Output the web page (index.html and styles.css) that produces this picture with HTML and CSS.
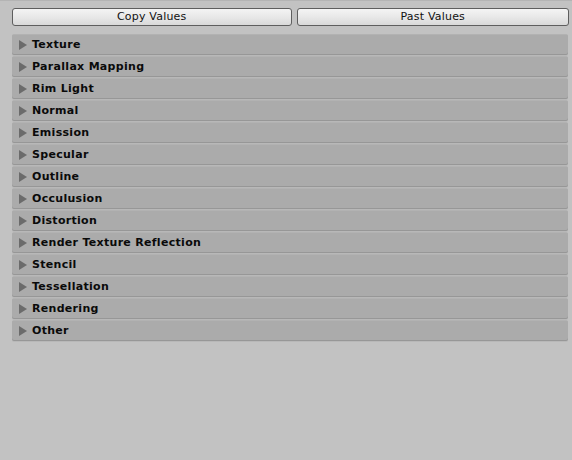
FILE: index.html
```html
<!DOCTYPE html>
<html>
<head>
<meta charset="utf-8">
<link rel="stylesheet" href="styles.css">
</head>
<body>
<div class="topline"></div>
<div class="panel">
  <div class="buttons">
    <button class="btn btn-left">Copy Values</button>
    <button class="btn btn-right">Past Values</button>
  </div>
  <div class="list">
    <div class="row"><span class="tri"></span>Texture</div>
    <div class="row"><span class="tri"></span>Parallax Mapping</div>
    <div class="row"><span class="tri"></span>Rim Light</div>
    <div class="row"><span class="tri"></span>Normal</div>
    <div class="row"><span class="tri"></span>Emission</div>
    <div class="row"><span class="tri"></span>Specular</div>
    <div class="row"><span class="tri"></span>Outline</div>
    <div class="row"><span class="tri"></span>Occulusion</div>
    <div class="row"><span class="tri"></span>Distortion</div>
    <div class="row"><span class="tri"></span>Render Texture Reflection</div>
    <div class="row"><span class="tri"></span>Stencil</div>
    <div class="row"><span class="tri"></span>Tessellation</div>
    <div class="row"><span class="tri"></span>Rendering</div>
    <div class="row"><span class="tri"></span>Other</div>
  </div>
</div>
</body>
</html>
```
FILE: styles.css
```css
html, body {
  margin: 0;
  padding: 0;
  background: #c2c2c2;
  width: 572px;
  height: 460px;
  overflow: hidden;
  font-family: "DejaVu Sans", Verdana, sans-serif;
}
.topline {
  height: 1px;
  background: #b4b4b4;
}
.panel {
  width: 557px;
  padding: 7px 0 0 12px;
}
.buttons {
  display: flex;
  gap: 5px;
  height: 18px;
}
.btn {
  margin: 0;
  padding: 0;
  height: 18px;
  border: 1px solid #5e5e5e;
  border-radius: 3px;
  background: linear-gradient(#f4f4f4, #e8e8e8 50%, #d9d9d9);
  font-family: "DejaVu Sans", Verdana, sans-serif;
  font-size: 11px;
  color: #111;
  line-height: 16px;
  letter-spacing: 0.2px;
}
.btn-left {
  width: 280px;
}
.btn-right {
  width: 273px;
}
.list {
  width: 556px;
  margin-top: 8px;
  display: flex;
  flex-direction: column;
  gap: 2px;
}
.row {
  box-sizing: border-box;
  height: 20px;
  background: #ababab;
  border-radius: 2px;
  border-top: 1px solid #b2b2b2;
  box-shadow: 0 1px 0 #979797, 0 2px 0 #b8b8b8;
  display: flex;
  align-items: center;
  font-size: 11px;
  font-weight: bold;
  color: #0a0a0a;
  letter-spacing: 0.3px;
}
.tri {
  flex: none;
  width: 0;
  height: 0;
  border-top: 5px solid transparent;
  border-bottom: 5px solid transparent;
  border-left: 8px solid #6b6b6b;
  margin-left: 7px;
  margin-right: 5px;
}
```
